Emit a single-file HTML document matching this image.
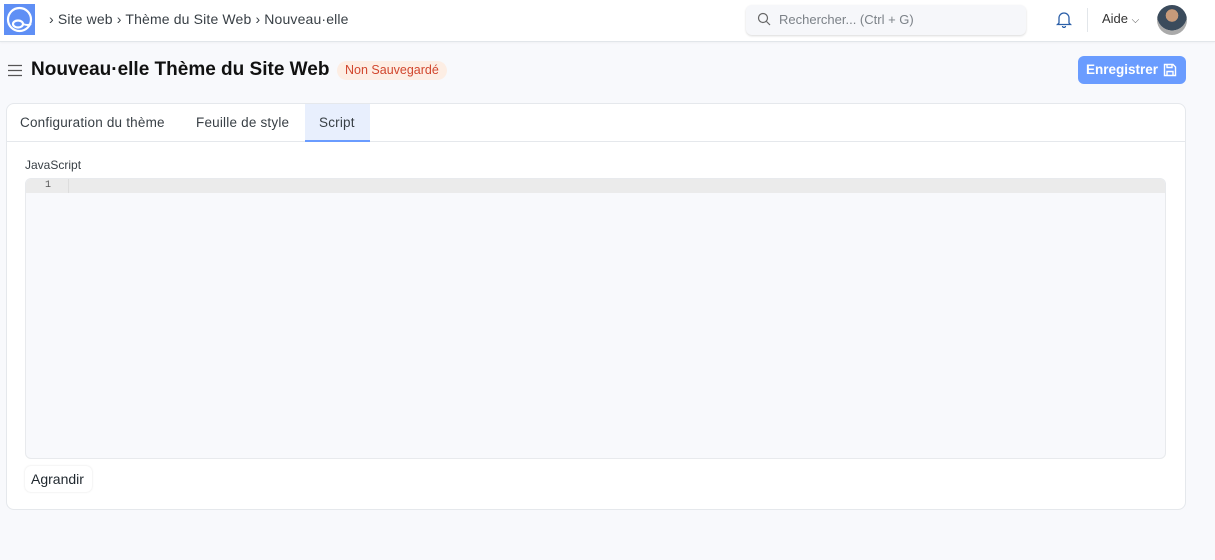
<!DOCTYPE html>
<html><head><meta charset="utf-8"><style>
*{box-sizing:border-box;margin:0;padding:0}
body{width:1215px;height:560px;background:#f8f9fc;font-family:"Liberation Sans",sans-serif;color:#1f272e;position:relative;overflow:hidden}
.nav{position:absolute;left:0;top:0;width:1215px;height:42px;background:#fff;border-bottom:1px solid #e2e6ea;box-shadow:0 1px 2px rgba(0,0,0,.04)}
.abs{position:absolute}
.crumb{left:49px;top:11px;font-size:14px;color:#383f45;letter-spacing:.15px}
.search{left:746px;top:5px;width:280px;height:30px;background:#f6f7fa;border-radius:6px;box-shadow:0 1px 2px rgba(0,0,0,.15);font-size:13px;color:#7c8288;padding:7px 0 0 33px}
.title{left:31px;top:59px;font-size:19px;font-weight:bold;color:#111}
.badge{left:337px;top:61px;height:19px;padding:2px 8px;background:#fdeee4;color:#d1472e;border-radius:10px;font-size:12.5px}
.btn{left:1078px;top:56px;width:108px;height:28px;background:#6a9cff;border-radius:6px;color:#fff;font-size:13.5px;font-weight:bold;padding:6px 0 0 8px}
.card{left:6px;top:103px;width:1180px;height:407px;background:#fff;border:1px solid #e5e8ec;border-radius:8px}
.tabs{left:6px;top:103px;width:1180px;height:39px;border-bottom:1px solid #e5e8ec}
.tab{top:115px;font-size:13.5px;color:#383f45;letter-spacing:.2px}
.stab{left:305px;top:104px;width:65px;height:38px;background:#e8effd;border-bottom:2px solid #6a9cff}
.editor{left:25px;top:178px;width:1141px;height:281px;background:#f8f9fc;border:1px solid #e8eaed;border-radius:6px;overflow:hidden}
.line{position:absolute;left:0;top:0;width:100%;height:14px;background:#ebebeb}
.gut{position:absolute;left:42px;top:0;width:1px;height:14px;background:#ddd}
.ag{left:25px;top:466px;width:67px;height:26px;background:#fff;border-radius:6px;box-shadow:0 0 2px rgba(0,0,0,.12);font-size:14px;padding:5px 0 0 6px}
</style></head><body>
<div class="nav"></div>
<svg class="abs" style="left:4px;top:4px" width="31" height="31" viewBox="0 0 31 31"><rect width="31" height="31" fill="#5f8ff5"/><circle cx="15.5" cy="15.5" r="11.5" fill="none" stroke="#fff" stroke-width="2.2"/><ellipse cx="14" cy="20" rx="5" ry="3.5" fill="none" stroke="#fff" stroke-width="2.2"/><path d="M19 20 Q24 22 27 20" stroke="#fff" stroke-width="2" fill="none"/></svg>
<div class="abs crumb">› Site web › Thème du Site Web › Nouveau·elle</div>
<div class="abs search">Rechercher... (Ctrl + G)</div>
<svg class="abs" style="left:757px;top:12px" width="14" height="14" viewBox="0 0 14 14"><circle cx="6" cy="6" r="4.5" fill="none" stroke="#666" stroke-width="1.2"/><path d="M9.5 9.5L13 13" stroke="#666" stroke-width="1.2"/></svg>
<svg class="abs" style="left:1056px;top:10px" width="16" height="18" viewBox="0 0 16 18"><path d="M3 13V8a5 5 0 0 1 10 0v5l1.5 1.5h-13z M6.5 16a1.5 1.5 0 0 0 3 0" fill="none" stroke="#2b5fa8" stroke-width="1.3"/></svg>
<div class="abs" style="left:1087px;top:8px;width:1px;height:24px;background:#e2e6ea"></div>
<div class="abs" style="left:1102px;top:11px;font-size:13px;color:#333">Aide <span style="font-size:10px;color:#555">⌵</span></div>
<div class="abs" style="left:1157px;top:5px;width:30px;height:30px;border-radius:50%;background:radial-gradient(circle at 50% 35%,#c79a7a 0 25%,#3b4b5c 26% 60%,#aaa 61%)"></div>
<svg class="abs" style="left:8px;top:64px" width="14" height="13"><path d="M0 1.5h14M0 6.5h14M0 11.5h14" stroke="#555" stroke-width="1.3"/></svg>
<div class="abs title">Nouveau·elle Thème du Site Web</div>
<div class="abs badge">Non Sauvegardé</div>
<div class="abs btn">Enregistrer</div>
<svg class="abs" style="left:1163px;top:63px" width="14" height="14" viewBox="0 0 14 14"><path d="M1.5 1.5h8.5l2.5 2.5v8.5h-11z M4 1.5v3h5v-3 M4 12.5v-4h6v4" fill="none" stroke="#fff" stroke-width="1.4"/></svg>
<div class="abs card"></div>
<div class="abs tabs"></div>
<div class="abs stab"></div>
<div class="abs tab" style="left:20px">Configuration du thème</div>
<div class="abs tab" style="left:196px">Feuille de style</div>
<div class="abs tab" style="left:319px">Script</div>
<div class="abs" style="left:25px;top:158px;font-size:12px;color:#383f45">JavaScript</div>
<div class="abs editor"><div class="line"></div><div class="gut"></div><div style="position:absolute;left:19px;top:1px;font-size:10px;color:#555;font-family:'Liberation Mono',monospace">1</div></div>
<div class="abs ag">Agrandir</div>
</body></html>
